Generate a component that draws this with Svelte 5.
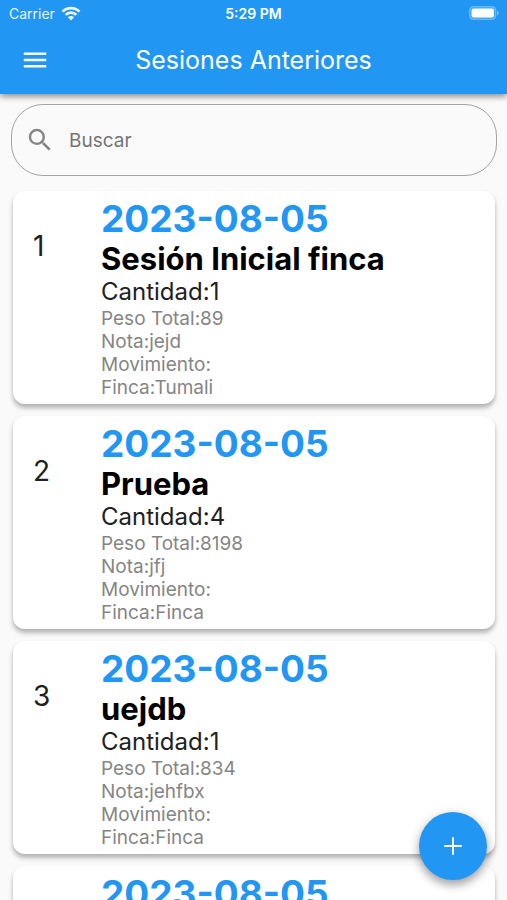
<script>
  const sessions = [
    { name: 'Sesión Inicial finca', date: '2023-08-05', count: 1, weight: 89, note: 'jejd', movement: '', farm: 'Tumali' },
    { name: 'Prueba', date: '2023-08-05', count: 4, weight: 8198, note: 'jfj', movement: '', farm: 'Finca' },
    { name: 'uejdb', date: '2023-08-05', count: 1, weight: 834, note: 'jehfbx', movement: '', farm: 'Finca' },
    { name: 'Prueba', date: '2023-08-05', count: 1, weight: 89, note: '', movement: '', farm: 'Finca' }
  ];
  let query = $state('');
  const visible = $derived(
    sessions.filter((s) => s.name.toLowerCase().includes(query.toLowerCase()))
  );
</script>

<div class="app">
  <header>
    <div class="status">
      <span class="carrier">
        Carrier
        <svg width="20" height="15" viewBox="0 0 20 15" aria-hidden="true">
          <g fill="none" stroke="#fff" stroke-width="2.7">
            <path d="M1.5 5.6a12 12 0 0 1 17 0" />
            <path d="M4.6 8.9a7.6 7.6 0 0 1 10.8 0" />
          </g>
          <path d="M6.9 11.3a4.4 4.4 0 0 1 6.2 0L10 14.4z" fill="#fff" />
        </svg>
      </span>
      <span class="time">5:29 PM</span>
      <span class="battery">
        <svg width="31" height="14" viewBox="0 0 31 14" aria-hidden="true">
          <rect x="0.7" y="0.7" width="26" height="12.6" rx="3.6" fill="#fff" fill-opacity="0.15" stroke="#fff" stroke-opacity="0.3" stroke-width="1.2" />
          <rect x="2.6" y="2.6" width="22.4" height="8.8" rx="2" fill="#fff" />
          <path d="M28 4.6c2.2.8 2.2 4 0 4.8z" fill="#fff" fill-opacity="0.45" />
        </svg>
      </span>
    </div>
    <div class="toolbar">
      <button class="menu" aria-label="Menú">
        <svg width="30" height="30" viewBox="0 0 24 24" aria-hidden="true">
          <path d="M3 18h18v-2H3v2zm0-5h18v-2H3v2zm0-7v2h18V6H3z" fill="#fff" />
        </svg>
      </button>
      <h1>Sesiones Anteriores</h1>
    </div>
  </header>

  <main>
    <label class="search">
      <svg width="30" height="30" viewBox="0 0 24 24" aria-hidden="true">
        <path d="M15.5 14h-.79l-.28-.27A6.471 6.471 0 0 0 16 9.5 6.5 6.5 0 1 0 9.5 16c1.61 0 3.09-.59 4.23-1.57l.27.28v.79l5 4.99L20.49 19l-4.99-5zm-6 0C7.01 14 5 11.99 5 9.5S7.01 5 9.5 5 14 7.01 14 9.5 11.99 14 9.5 14z" fill="#858585" />
      </svg>
      <input type="text" placeholder="Buscar" aria-label="Buscar" bind:value={query} />
    </label>

    <ul>
      {#each visible as s, i}
        <li>
          <span class="index">{i + 1}</span>
          <div class="body">
            <p class="date">{s.date}</p>
            <h2>{s.name}</h2>
            <p class="count">Cantidad:{s.count}</p>
            <p>Peso Total:{s.weight}</p>
            <p>Nota:{s.note}</p>
            <p>Movimiento:{s.movement}</p>
            <p>Finca:{s.farm}</p>
          </div>
        </li>
      {/each}
    </ul>
  </main>

  <button class="add" aria-label="Agregar">
    <svg width="30" height="30" viewBox="0 0 24 24" aria-hidden="true">
      <path d="M19 12.8h-6.2V19h-1.6v-6.2H5v-1.6h6.2V5h1.6v6.2H19z" fill="#fff" />
    </svg>
  </button>
</div>

<style>
  .app {
    height: 100vh;
    display: flex;
    flex-direction: column;
    overflow: hidden;
    background: #fafafa;
    color: #212121;
    font-family: Inter, 'Liberation Sans', sans-serif;
  }
  h1, h2, p, ul {
    margin: 0;
    padding: 0;
  }
  button {
    display: grid;
    place-items: center;
    padding: 0;
    border: 0;
    background: none;
    cursor: pointer;
  }
  header {
    position: relative;
    z-index: 1;
    flex: none;
    background: #2196f3;
    color: #fff;
    box-shadow: 0 3px 6px rgba(0, 0, 0, 0.4);
  }
  .status {
    display: grid;
    grid-template-columns: 1fr auto 1fr;
    align-items: center;
    height: 26px;
    padding: 0 7px;
    font-size: 14px;
  }
  .carrier {
    display: flex;
    align-items: center;
    gap: 6px;
    padding-left: 2px;
    opacity: 0.9;
  }
  .time {
    font-weight: 600;
  }
  .battery {
    display: flex;
    justify-content: flex-end;
  }
  .toolbar {
    display: grid;
    grid-template-columns: 70px 1fr 70px;
    align-items: center;
    height: 68px;
  }
  .menu {
    height: 60px;
  }
  h1 {
    font-size: 25px;
    font-weight: 400;
    line-height: 32px;
    text-align: center;
  }
  main {
    flex: 1;
    min-height: 0;
    overflow-y: auto;
    scrollbar-width: none;
    padding: 10px 12px 12px 13px;
  }
  .search {
    display: flex;
    align-items: center;
    gap: 14px;
    height: 70px;
    margin: 0 -2px 15px;
    padding: 0 13px;
    border: 1px solid #a3a3a3;
    border-radius: 32px;
  }
  input {
    flex: 1;
    min-width: 0;
    padding: 0;
    border: 0;
    outline: 0;
    background: none;
    color: #212121;
    font: inherit;
    font-size: 19px;
  }
  input::placeholder {
    color: #757575;
    opacity: 1;
  }
  ul {
    display: flex;
    flex-direction: column;
    gap: 12px;
    list-style: none;
  }
  li {
    display: flex;
    padding: 6px 20px 5px;
    border-radius: 12px;
    background: #fff;
    box-shadow: 0 4px 5px rgba(0, 0, 0, 0.26), 0 2px 4px rgba(0, 0, 0, 0.06);
  }
  .index {
    flex: none;
    width: 68px;
    padding-top: 32px;
    font-size: 28px;
    line-height: 34px;
  }
  .body {
    color: #858585;
    font-size: 19px;
    line-height: 23px;
  }
  .date {
    color: #2196f3;
    font-size: 37px;
    font-weight: 700;
    line-height: 44px;
  }
  h2 {
    color: #000;
    font-size: 31px;
    font-weight: 700;
    line-height: 36px;
  }
  .count {
    color: #212121;
    font-size: 24px;
    line-height: 30px;
  }
  .add {
    position: absolute;
    right: 20px;
    bottom: 20px;
    z-index: 2;
    width: 68px;
    height: 68px;
    border-radius: 50%;
    background: #2196f3;
    box-shadow: 0 5px 8px rgba(0, 0, 0, 0.3), 0 2px 14px rgba(0, 0, 0, 0.12);
  }
</style>
